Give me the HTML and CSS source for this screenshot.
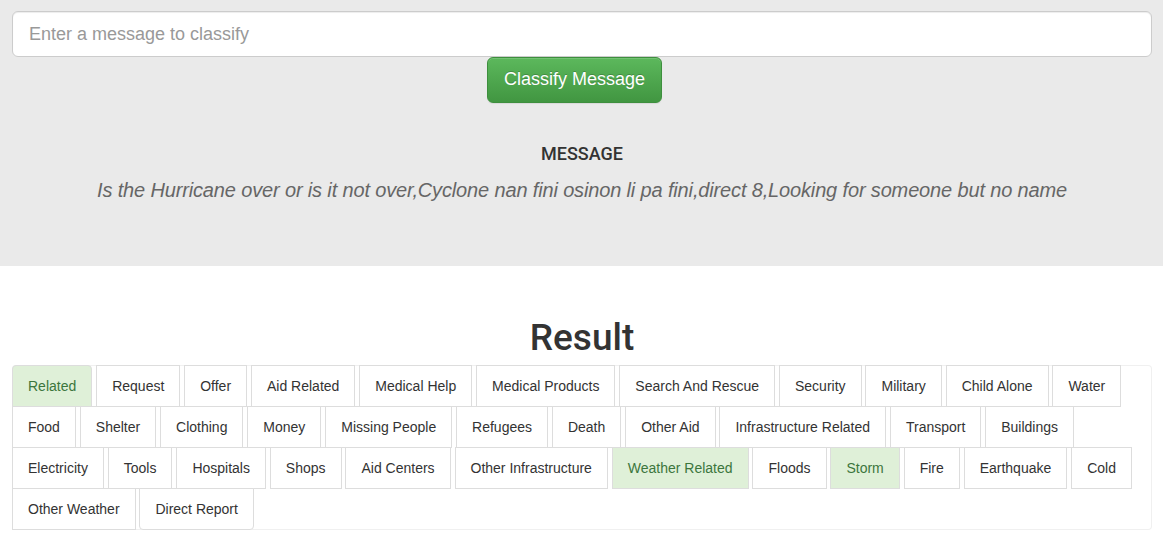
FILE: index.html
```html
<!DOCTYPE html>
<html lang="en">
<head>
<meta charset="utf-8">
<title>Disaster Response</title>
<link rel="stylesheet" href="styles.css">
</head>
<body>
<div class="jumbotron">
  <div class="container">
    <form class="classify-form">
      <input class="input-lg" type="text" placeholder="Enter a message to classify">
      <div class="btn-col"><button type="button" class="btn-success">Classify Message</button></div>
    </form>
    <div class="message">
      <h4 class="message-title">MESSAGE</h4>
      <p class="lead">Is the Hurricane over or is it not over,Cyclone nan fini osinon li pa fini,direct 8,Looking for someone but no name</p>
    </div>
  </div>
</div>
<div class="container result">
  <h1 class="result-title">Result</h1>
  <div class="list-wrap"><div class="list-group">
    <span class="item success">Related</span>
    <span class="item">Request</span>
    <span class="item">Offer</span>
    <span class="item">Aid Related</span>
    <span class="item">Medical Help</span>
    <span class="item">Medical Products</span>
    <span class="item">Search And Rescue</span>
    <span class="item">Security</span>
    <span class="item">Military</span>
    <span class="item">Child Alone</span>
    <span class="item">Water</span>
    <span class="item">Food</span>
    <span class="item">Shelter</span>
    <span class="item">Clothing</span>
    <span class="item">Money</span>
    <span class="item">Missing People</span>
    <span class="item">Refugees</span>
    <span class="item">Death</span>
    <span class="item">Other Aid</span>
    <span class="item">Infrastructure Related</span>
    <span class="item">Transport</span>
    <span class="item">Buildings</span>
    <span class="item">Electricity</span>
    <span class="item">Tools</span>
    <span class="item">Hospitals</span>
    <span class="item">Shops</span>
    <span class="item">Aid Centers</span>
    <span class="item">Other Infrastructure</span>
    <span class="item success">Weather Related</span>
    <span class="item">Floods</span>
    <span class="item success">Storm</span>
    <span class="item">Fire</span>
    <span class="item">Earthquake</span>
    <span class="item">Cold</span>
    <span class="item">Other Weather</span>
    <span class="item last">Direct Report</span>
  </div></div>
</div>
</body>
</html>
```

FILE: styles.css
```css
* { box-sizing: border-box; }

body {
  margin: 0;
  font-family: "Liberation Sans", Arial, sans-serif;
  font-size: 14px;
  line-height: 20px;
  color: #333;
  background: #fff;
}

.container {
  padding: 0 11px 0 12px;
}

.jumbotron {
  background: #eaeaea;
  height: 266px;
  padding-top: 11px;
}

.classify-form {
  margin: 0;
}

.input-lg {
  display: block;
  width: 100%;
  height: 46px;
  margin: 0;
  padding: 10px 16px;
  font-family: "Liberation Sans", Arial, sans-serif;
  font-size: 18px;
  line-height: 1.3333;
  color: #555;
  background: #fff;
  border: 1px solid #ccc;
  border-radius: 6px;
  box-shadow: inset 0 1px 1px rgba(0, 0, 0, 0.075);
  outline: none;
}

.input-lg::placeholder {
  color: #999;
}

.btn-col {
  margin-left: 41.6667%;
}

.btn-success {
  display: inline-block;
  height: 46px;
  margin: 0;
  padding: 10px 16px;
  font-family: "Liberation Sans", Arial, sans-serif;
  font-size: 18px;
  line-height: 1.3333;
  color: #fff;
  text-shadow: 0 -1px 0 rgba(0, 0, 0, 0.2);
  background: linear-gradient(to bottom, #5cb85c 0%, #419641 100%);
  border: 1px solid #3e8f3e;
  border-radius: 6px;
  box-shadow: inset 0 1px 0 rgba(255, 255, 255, 0.15), 0 1px 1px rgba(0, 0, 0, 0.075);
  cursor: pointer;
}

.message {
  margin-top: 41px;
  text-align: center;
}

.message-title {
  margin: 0;
  font-family: Roboto, "Liberation Sans", Arial, sans-serif;
  font-size: 18px;
  font-weight: 500;
  line-height: 20px;
  color: #333;
}

.lead {
  margin: 12px 0 0;
  font-size: 20px;
  font-style: italic;
  font-weight: 300;
  line-height: 29px;
  letter-spacing: -0.15px;
  color: #666;
}

.result {
  padding-top: 52px;
}

.result-title {
  margin: 0 0 7px;
  height: 40px;
  font-family: Roboto, "Liberation Sans", Arial, sans-serif;
  font-size: 37px;
  font-weight: 500;
  line-height: 40px;
  text-align: center;
  color: #333;
}

.list-wrap {
  border-radius: 4px;
  box-shadow: inset 0 0 0 1px #f0f0f0;
}

.list-group {
  font-size: 14px;
  line-height: 20px;
}

.item {
  display: inline-block;
  padding: 10px 15px;
  margin-bottom: -1px;
  background: #fff;
  border: 1px solid #ddd;
  color: #333;
}

.item:first-child {
  border-top-left-radius: 4px;
  border-top-right-radius: 4px;
}

.item.last {
  margin-bottom: 0;
  border-bottom-left-radius: 4px;
  border-bottom-right-radius: 4px;
}

.item.success {
  background: #dff0d8;
  color: #3c763d;
}
```
